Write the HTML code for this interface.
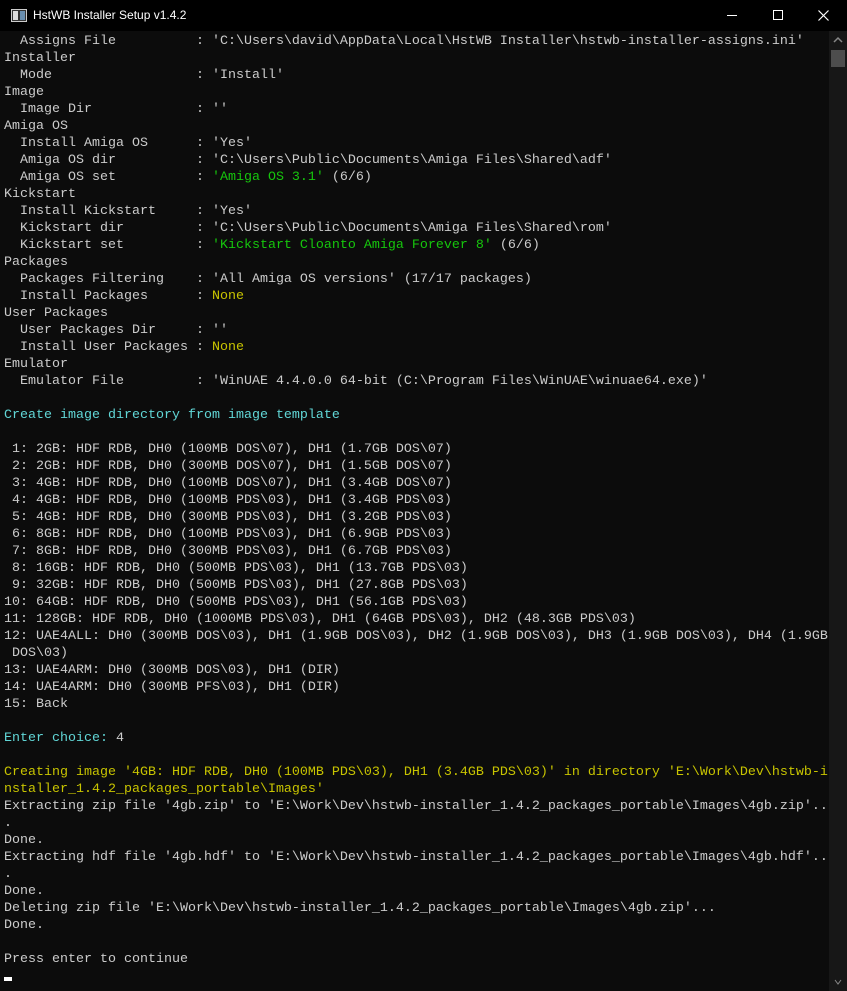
<!DOCTYPE html>
<html><head><meta charset="utf-8"><style>
html,body{margin:0;padding:0;background:#0c0c0c;width:847px;height:991px;overflow:hidden;position:relative}
#title{position:absolute;left:0;top:0;width:847px;height:31px;background:#000;color:#fff;font:12px "Liberation Sans",sans-serif}
#title .t{position:absolute;left:33px;top:8px}
#ico{position:absolute;left:11px;top:9px;width:14px;height:11px;border:1px solid #ccc;background:#333}
#ico:before{content:"";position:absolute;left:1px;top:1px;width:5px;height:9px;background:#ddd}
#ico:after{content:"";position:absolute;left:8px;top:1px;width:5px;height:9px;background:#6a8fb0}
pre{position:absolute;left:4px;top:33px;margin:0;font:13.33px/17px "Liberation Mono",monospace;color:#cccccc;white-space:pre}
.c{color:#61d6d6}.g{color:#16c60c}.y{color:#c8c400}
#sb{position:absolute;left:829px;top:31px;width:18px;height:960px;background:#171717}
#th{position:absolute;left:831px;top:50px;width:14px;height:17px;background:#4d4d4d}
#cur{position:absolute;left:4px;top:977px;width:8px;height:4px;background:#fff}
</style></head><body>
<div id="title"><div id="ico"></div><span class="t">HstWB Installer Setup v1.4.2</span>
<svg style="position:absolute;left:720px;top:0" width="127" height="31">
<line x1="7" y1="15.5" x2="17" y2="15.5" stroke="#fff" stroke-width="1"/>
<rect x="53.5" y="10.5" width="9" height="9" fill="none" stroke="#fff"/>
<path d="M98.5 10.5 L108.5 20.5 M108.5 10.5 L98.5 20.5" stroke="#fff" stroke-width="1.2"/>
</svg></div>
<div id="sb"><svg width="18" height="960"><path d="M5 11 L9 7 L13 11" stroke="#888" fill="none" stroke-width="1.5"/><path d="M6 949 L9 953 L12 949" stroke="#888" fill="none" stroke-width="1"/></svg></div>
<div id="th"></div>
<pre>  Assigns File          : 'C:\Users\david\AppData\Local\HstWB Installer\hstwb-installer-assigns.ini'
Installer
  Mode                  : 'Install'
Image
  Image Dir             : ''
Amiga OS
  Install Amiga OS      : 'Yes'
  Amiga OS dir          : 'C:\Users\Public\Documents\Amiga Files\Shared\adf'
  Amiga OS set          : <span class="g">'Amiga OS 3.1'</span> (6/6)
Kickstart
  Install Kickstart     : 'Yes'
  Kickstart dir         : 'C:\Users\Public\Documents\Amiga Files\Shared\rom'
  Kickstart set         : <span class="g">'Kickstart Cloanto Amiga Forever 8'</span> (6/6)
Packages
  Packages Filtering    : 'All Amiga OS versions' (17/17 packages)
  Install Packages      : <span class="y">None</span>
User Packages
  User Packages Dir     : ''
  Install User Packages : <span class="y">None</span>
Emulator
  Emulator File         : 'WinUAE 4.4.0.0 64-bit (C:\Program Files\WinUAE\winuae64.exe)'

<span class="c">Create image directory from image template</span>

 1: 2GB: HDF RDB, DH0 (100MB DOS\07), DH1 (1.7GB DOS\07)
 2: 2GB: HDF RDB, DH0 (300MB DOS\07), DH1 (1.5GB DOS\07)
 3: 4GB: HDF RDB, DH0 (100MB DOS\07), DH1 (3.4GB DOS\07)
 4: 4GB: HDF RDB, DH0 (100MB PDS\03), DH1 (3.4GB PDS\03)
 5: 4GB: HDF RDB, DH0 (300MB PDS\03), DH1 (3.2GB PDS\03)
 6: 8GB: HDF RDB, DH0 (100MB PDS\03), DH1 (6.9GB PDS\03)
 7: 8GB: HDF RDB, DH0 (300MB PDS\03), DH1 (6.7GB PDS\03)
 8: 16GB: HDF RDB, DH0 (500MB PDS\03), DH1 (13.7GB PDS\03)
 9: 32GB: HDF RDB, DH0 (500MB PDS\03), DH1 (27.8GB PDS\03)
10: 64GB: HDF RDB, DH0 (500MB PDS\03), DH1 (56.1GB PDS\03)
11: 128GB: HDF RDB, DH0 (1000MB PDS\03), DH1 (64GB PDS\03), DH2 (48.3GB PDS\03)
12: UAE4ALL: DH0 (300MB DOS\03), DH1 (1.9GB DOS\03), DH2 (1.9GB DOS\03), DH3 (1.9GB DOS\03), DH4 (1.9GB
 DOS\03)
13: UAE4ARM: DH0 (300MB DOS\03), DH1 (DIR)
14: UAE4ARM: DH0 (300MB PFS\03), DH1 (DIR)
15: Back

<span class="c">Enter choice: </span>4

<span class="y">Creating image '4GB: HDF RDB, DH0 (100MB PDS\03), DH1 (3.4GB PDS\03)' in directory 'E:\Work\Dev\hstwb-i
nstaller_1.4.2_packages_portable\Images'</span>
Extracting zip file '4gb.zip' to 'E:\Work\Dev\hstwb-installer_1.4.2_packages_portable\Images\4gb.zip'..
.
Done.
Extracting hdf file '4gb.hdf' to 'E:\Work\Dev\hstwb-installer_1.4.2_packages_portable\Images\4gb.hdf'..
.
Done.
Deleting zip file 'E:\Work\Dev\hstwb-installer_1.4.2_packages_portable\Images\4gb.zip'...
Done.

Press enter to continue</pre>
<div id="cur"></div>
</body></html>
